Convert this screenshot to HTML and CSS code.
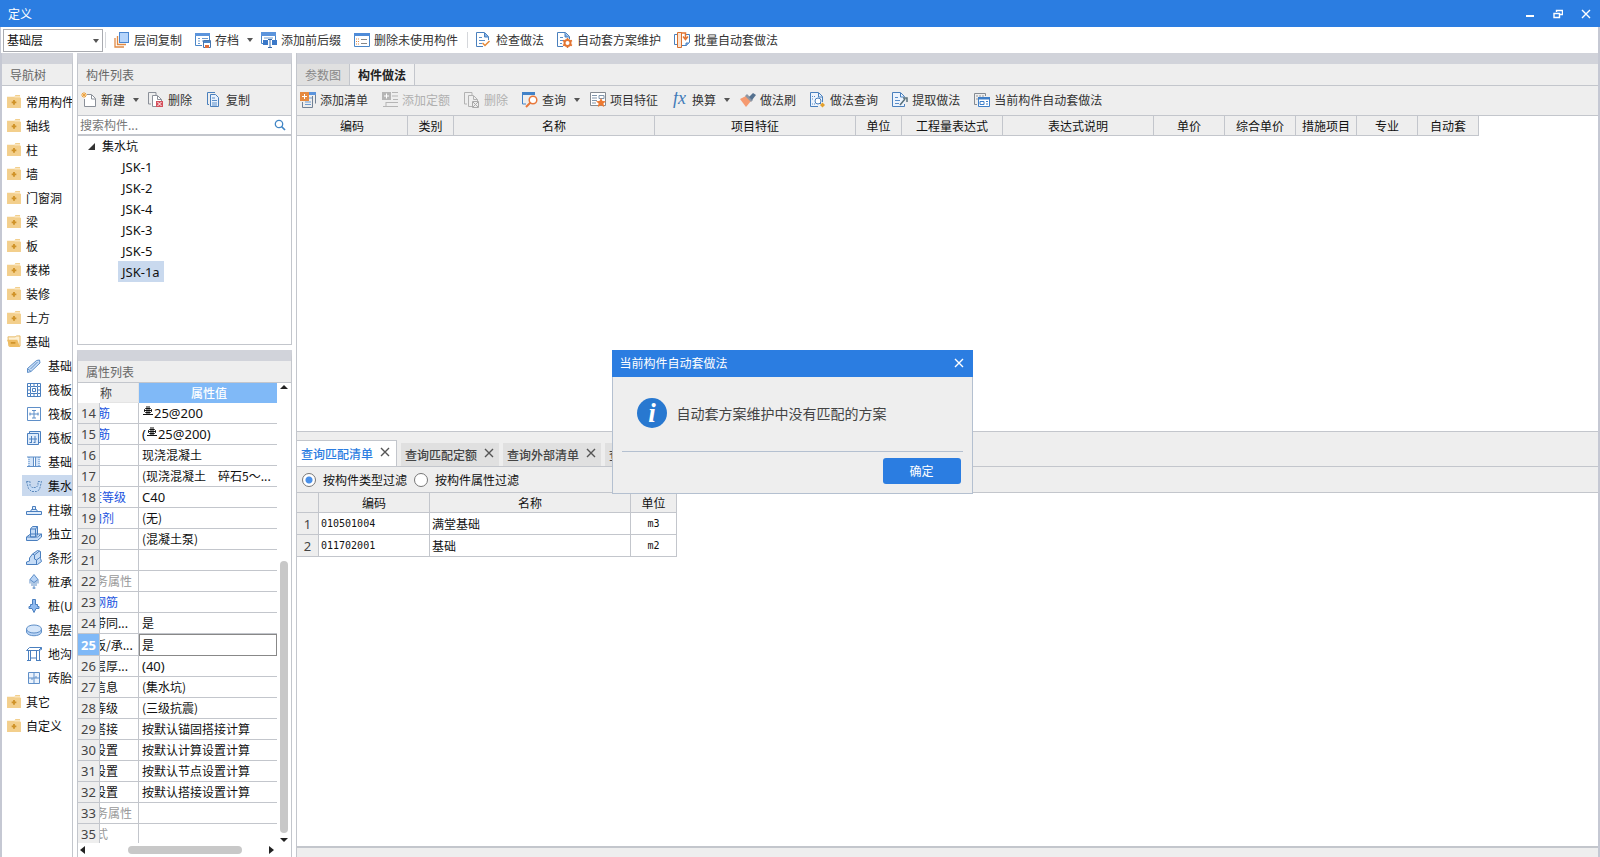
FILE: index.html
```html
<!DOCTYPE html>
<html lang="zh-CN">
<head>
<meta charset="utf-8">
<title>定义</title>
<link rel="stylesheet" href="styles.css">
</head>
<body>
<svg class="defs" aria-hidden="true">
  <symbol id="arrow" viewBox="0 0 6 4"><path d="M0 0h6L3 4z" fill="#555"/></symbol>
  <symbol id="x" viewBox="0 0 10 10"><path d="M1 1l8 8M9 1L1 9" fill="none" stroke="currentColor" stroke-width="1.4"/></symbol>
  <symbol id="folder" viewBox="0 0 15 14"><path d="M0 2h8l1-2h5v3h1v11H0z" fill="#f3cf8c"/><path d="M8 2h6" stroke="#fff3dc"/><path d="M7.500 5.500v5M5 8h5" stroke="#cf9228" stroke-width="2"/></symbol>
  <symbol id="folder-open" viewBox="0 0 15 14"><path d="M1 2h8l1-1h4v11H2z" fill="#fdf0d4" stroke="#e5b65e"/><path d="M0 5h11l3 8H3z" fill="#efbd63"/><path d="M4 8.500h5" stroke="#c98a1e" stroke-width="1.500"/></symbol>
  <symbol id="layers" viewBox="0 0 16 16"><path d="M1 6v9h9M3.500 4v8.500H12" fill="none" stroke="#e08a45" stroke-width="1.300"/><rect x="5.500" y=".5" width="9" height="10" fill="#b5d4fb" stroke="#4a86d0"/></symbol>
  <symbol id="save" viewBox="0 0 16 16"><path d="M.5 1.500h14V8M.5 1.500v12H7" fill="none" stroke="#4a86c8"/><path d="M0 1h15v3H0z" fill="#5b94dc"/><path d="M3 6.500h2M7 6.500h6M3 9h2M7 9h1M3 11.500h2" stroke="#6d9bd0"/><path d="M8.500 8.500h7v7h-7z" fill="#fff" stroke="#4775ae"/><path d="M9 9h6v2H9z" fill="#4a86c8"/><path d="M10 13h4v3h-4z" fill="#df6d3a"/></symbol>
  <symbol id="affix" viewBox="0 0 16 16"><path d="M.5 1.500h14v8M.5 1v10.500H3" fill="none" stroke="#4a86c8"/><path d="M0 0h15v4H0z" fill="#5b94dc"/><path d="M3 6h9" stroke="#6d9bd0"/><path d="M2 8h5v5H2zM11 8h5v5h-5z" fill="#3a78c8"/><path d="M7 7.500h4M9 7.500v8M7 15.500h4" stroke="#3568a8" fill="none"/></symbol>
  <symbol id="list" viewBox="0 0 16 16"><path d="M.5 1.500h15v13H.5z" fill="#fff" stroke="#4a86c8"/><path d="M0 1h16v3H0z" fill="#4f8bd8"/><path d="M2 7h3M2 9.500h3M2 12h3" stroke="#e08a45" stroke-dasharray="1 1"/><path d="M7 7.500h6M7 11.500h6" stroke="#888"/></symbol>
  <symbol id="check" viewBox="0 0 16 16"><path d="M12.500 8V4.500l-4-4h-8v14H7" fill="#fff" stroke="#4a80bd"/><path d="M8.500 1v4h4" fill="#7badea" stroke="#4a80bd"/><path d="M3 5.500h3M3 8.500h6M3 11.500h3" stroke="#5b8fc9"/><path d="M6.500 11l2.500 2.500L13.500 9" fill="none" stroke="#e58a3a" stroke-width="1.500"/></symbol>
  <symbol id="gear" viewBox="0 0 16 16"><path d="M12.500 7V4.500l-4-4h-8v14H6" fill="#fff" stroke="#4a80bd"/><path d="M8 1v4h4" fill="#7badea" stroke="#4a80bd"/><path d="M3 5.500h3M3 8.500h4M3 11.500h2" stroke="#5b8fc9"/><circle cx="10.500" cy="11" r="3" fill="#fff" stroke="#e37533" stroke-width="2"/><path d="M10.500 6v2M10.500 14v2M6 8.500l2 1M13 12.500l2 1M15 8.500l-2 1M8 12.500l-2 1" stroke="#e37533" stroke-width="1.500"/></symbol>
  <symbol id="batch" viewBox="0 0 16 16"><path d="M3 2.500H.5v10H3M12 2.500h3.500v8l-3 3H8" fill="none" stroke="#4a80bd"/><path d="M3.500.5h4v15h-4z" fill="#fbe3d2" stroke="#d9712e"/><path d="M7 1h4.500v5M9 4.500l2.500 3L14 4.500" fill="none" stroke="#e37533" stroke-width="1.500"/><path d="M12 14v-3h3" fill="#8bb5ea" stroke="#4a80bd"/></symbol>
  <symbol id="new" viewBox="0 0 16 16"><path d="M6 2.500h4.500l4 4v8h-11V7" fill="#fff" stroke="#8b9099"/><path d="M10.500 3v4h4" fill="none" stroke="#8b9099"/><path d="M3 0v6M0 3h6M1 1l4 4M5 1L1 5" stroke="#f0a23a"/></symbol>
  <symbol id="del" viewBox="0 0 16 16"><path d="M3 12H.5V.5H8V3" fill="none" stroke="#8b9099"/><path d="M8 14.500H4.500v-11h5l4 4V9" fill="#fff" stroke="#8b9099"/><path d="M9.500 4v3.500h4" fill="none" stroke="#8b9099"/><path d="M8 9h7v6H8z" fill="#d5505c"/><path d="M9.500 10l4 4M13.500 10l-4 4" stroke="#fff"/></symbol>
  <symbol id="del-off" viewBox="0 0 16 16"><path d="M3 12H.5V.5H8V3M8 14.500H4.500v-11h5l4 4V9M9.500 4v3.500h4" fill="none" stroke="#b2b2b2"/><path d="M8.500 9.500h6v6h-6zM9 10l5 5M14 10l-5 5" fill="none" stroke="#aaa"/></symbol>
  <symbol id="copy" viewBox="0 0 16 16"><path d="M3 12.500H1.500V.5H9" fill="none" stroke="#4a80bd"/><path d="M4.500 2.500h5l3 3v9h-8z" fill="#e8f1fd" stroke="#4a80bd"/><path d="M6 6h3M6 8.500h5M6 11h5M6 13h5" stroke="#5b8fc9"/></symbol>
  <symbol id="search" viewBox="0 0 12 12"><circle cx="5" cy="5" r="3.700" fill="none" stroke="#4286c5" stroke-width="1.300"/><path d="M7.500 7.500L11 11" stroke="#4286c5" stroke-width="1.700"/></symbol>
  <symbol id="addlist" viewBox="0 0 16 16"><path d="M9 1.500h6.500v10M12.500 4v11.500h-10V10" fill="none" stroke="#718195"/><path d="M9 0h7v3H9z" fill="#5b94dc"/><path d="M9 6h3M5 10h6M5 12.500h6" stroke="#6d9bd0"/><path d="M0 0h9v9H0z" fill="#e68a3f"/><path d="M4.500 2v5M2 4.500h5" stroke="#fff"/></symbol>
  <symbol id="addquota" viewBox="0 0 16 16"><path d="M0 0h9v8H0z" fill="#b5b5b5"/><path d="M4.500 1.500v5M2 4h5" stroke="#fff"/><path d="M10 .5h6M10 4h6M11 7.500h5M4 10.500h12M1 14.500h15M4 10v4" stroke="#b5b5b5"/></symbol>
  <symbol id="query" viewBox="0 0 16 16"><path d="M0 0h13v3H0z" fill="#4182c8"/><path d="M.5 2v10H4" fill="none" stroke="#4182c8"/><circle cx="11" cy="8" r="3.800" fill="#fff" stroke="#e8783b" stroke-width="1.500"/><path d="M8.500 10.500L4 15" stroke="#e8783b" stroke-width="2"/></symbol>
  <symbol id="feature" viewBox="0 0 16 16"><path d="M.5.500h15v13H.5z" fill="#fff" stroke="#858b92"/><path d="M2 3.500h5M2 6h5M2 8.500h5M2 11h4M9 3.500h5v3H9z" fill="none" stroke="#8095ab"/><path d="M11 6l1.500 3 3.500.3-2.600 2.300.8 3.400-3.200-1.700L7.800 15l.8-3.400L6 9.300 9.500 9z" fill="#ed7a32"/></symbol>
  <symbol id="brush" viewBox="0 0 16 16"><path d="M0 7l6-3 5 5-5 6z" fill="#f59a70"/><path d="M5 4l2-2 6 6-2 2z" fill="#8d97a5"/><path d="M9 5l4-4 3 2-4 5z" fill="#54718f"/></symbol>
  <symbol id="docquery" viewBox="0 0 16 16"><path d="M12.500 10V4.500l-4-4h-8v14H8" fill="#edf4fd" stroke="#4a80bd"/><path d="M8.500 1v4h4" fill="none" stroke="#4a80bd"/><path d="M2 4.500h4M2 7h1M2 12h3" stroke="#5b8fc9" stroke-dasharray="1 1"/><circle cx="8" cy="9" r="3" fill="#fff" stroke="#4a80bd"/><path d="M10 11l2 2" stroke="#4a80bd"/><path d="M12.500 10.500l2.500 2.500-2.500 2.500-2.500-2.500z" fill="#e3a02c"/></symbol>
  <symbol id="extract" viewBox="0 0 16 16"><path d="M12.500 5v-.5l-4-4h-8v14h12V12" fill="#edf4fd" stroke="#4a80bd"/><path d="M8.500 1v4h4" fill="none" stroke="#4a80bd"/><path d="M3 5.500h3M3 8.500h5M3 11.500h4" stroke="#5b8fc9"/><path d="M8 13l5-6M11 6h4v4" fill="none" stroke="#59717c" stroke-width="1.500"/></symbol>
  <symbol id="auto" viewBox="0 0 16 16"><path d="M3 12.500H.5V1.500h11V4" fill="none" stroke="#858b92"/><path d="M2 4h8M2 7h2" stroke="#999" stroke-dasharray="2 1"/><path d="M4.500 5.500h11v9h-11z" fill="#fff" stroke="#3f7fc8"/><path d="M4 5h12v2.500H4z" fill="#3f7fc8"/><path d="M6 9.500h4v3H6zM12 9.500h2M12 12h2" fill="none" stroke="#3f7fc8"/></symbol>
  <symbol id="n1" viewBox="0 0 16 16"><path d="M1.500 14.500v-4l9-8 3-.5.5 3-9 8.500zM1.500 10.500l3.500 3M4.500 11l7-7" fill="#c6dcf6" stroke="#5f8fc8"/></symbol>
  <symbol id="n2" viewBox="0 0 16 16"><path d="M1.500 1.500h13v13h-13zM4.500 4.500h7v7h-7zM6.500 6.500h3v3h-3zM2 4.500h2M2 8h2M2 11.500h2M12 4.500h2M12 8h2M12 11.500h2M4.500 2v2M8 2v2M11.500 2v2M4.500 12v2M8 12v2M11.500 12v2" fill="none" stroke="#4a7fbf"/></symbol>
  <symbol id="n3" viewBox="0 0 16 16"><path d="M1.500 1.500h13v13h-13z" fill="#fff" stroke="#5f8fc8"/><path d="M3.500 8h9M8 4v8M6 4.500h4M6 12h4M4 6.500v3M12 6.500v3" fill="none" stroke="#5f8fc8"/></symbol>
  <symbol id="n4" viewBox="0 0 16 16"><path d="M1.500 3.500h11v11h-11zM3.500 3V1.500h11v11H13" fill="#dfecfb" stroke="#4a7fbf"/><path d="M3 9h8M5.500 6v7M9 6v7M3.500 12.500h2M7.500 12.500H9" fill="none" stroke="#4a7fbf"/></symbol>
  <symbol id="n5" viewBox="0 0 16 16"><path d="M2 3h5v10H2zM9 3h5v10H9z" fill="#d3e4f9"/><path d="M1 3h14M1 12.500h14M7.500 3v10M9.500 3v10" stroke="#5f8fc8"/><path d="M3 3v10M13 3v10" stroke="#5f8fc8" stroke-dasharray="1 1"/></symbol>
  <symbol id="n6" viewBox="0 0 16 16"><path d="M.5 3.500H4v4l2 2h4l2-2v-4h3.500l-2 8-3 2h-5l-3-3z" fill="#c6dcf6" stroke="#5a88bb" stroke-dasharray="2 1"/></symbol>
  <symbol id="n7" viewBox="0 0 16 16"><path d="M.5 9.500h15v3H.5zM4.500 9.500l1-2h5l1 2M6.500 7V4.500h3V7" fill="#dfecfb" stroke="#4a7fbf"/></symbol>
  <symbol id="n8" viewBox="0 0 16 16"><path d="M.5 11l4-3h11v3l-4 3.500H.5zM4.500 11V3l2-2.500h5V9l-2 2zM.5 11h11l4-3M4.500 3h5v8M9.500 3l2-2.500" fill="#c6dcf6" stroke="#4a7fbf"/></symbol>
  <symbol id="n9" viewBox="0 0 16 16"><path d="M.5 14.500V12l3-1V8l3-4 5-3.500 3 1v7l1 3-4 3zM6.500 4l2 1v4l2 1v4.500M8.500 5l5-4M10.500 10l4-3" fill="#c6dcf6" stroke="#4a7fbf"/></symbol>
  <symbol id="n10" viewBox="0 0 16 16"><path d="M8 .5l4 5-4 3-4-3zM4 5.500v4M12 5.500v4M8 8v7M6 7v5M10 7v5M6.500 14h3" fill="#b7d3f5" stroke="#5f8fc8"/></symbol>
  <symbol id="n11" viewBox="0 0 16 16"><path d="M6.500 1.500h3v5h2v2h1.500v2h-3L8 14.500 6 10.500H3v-2h1.500v-2h2z" fill="#8fbaf0" stroke="#4a7fbf"/></symbol>
  <symbol id="n12" viewBox="0 0 16 16"><path d="M.5 7v3c1 5 14 5 15 0V7" fill="#b7d3f5" stroke="#5f8fc8"/><ellipse cx="8" cy="7" rx="7.500" ry="4" fill="#d5e6fa" stroke="#5f8fc8"/></symbol>
  <symbol id="n13" viewBox="0 0 16 16"><path d="M.5 4.500h12l3-3H3.500zM12.500 4.500l3-1v-2M2.500 4.500v10M4.500 4.500v10M10.500 4.500v10M13.500 4.500v10M1 14.500h4M10 14.500h5M5 12h5" fill="none" stroke="#4a7fbf"/></symbol>
  <symbol id="n14" viewBox="0 0 16 16"><path d="M2.500 2.500h11v11h-11zM2.500 8h11M8 2.500v11M6 8v2M10 6v2" fill="#eaf2fc" stroke="#5f8fc8"/></symbol>
  <symbol id="rebar" viewBox="0 0 10 11"><path d="M2.500 2.500h5l1 1v2l-1 1h-5l-1-1v-2zM4 0v9M6 0v9M0 8.500h10M2 4.500h6" fill="none" stroke="#111"/></symbol>
</svg>

<div class="app">
  <header class="titlebar">
    <h1>定义</h1>
    <div class="winctl">
      <button aria-label="最小化"><svg viewBox="0 0 10 10"><path d="M1 7h8" stroke="#fff" stroke-width="2"/></svg></button>
      <button aria-label="还原"><svg viewBox="0 0 10 10"><path d="M3.500 3V1.500h6v4H7M1 4.500h5.500v4H1z" fill="none" stroke="#fff" stroke-width="1.400"/></svg></button>
      <button aria-label="关闭"><svg><use href="#x"/></svg></button>
    </div>
  </header>

  <div class="ribbon">
    <div class="combo">
      <select aria-label="楼层"><option>基础层</option></select>
      <svg class="caret"><use href="#arrow"/></svg>
    </div>
    <span class="sep"></span>
    <button class="tool"><svg><use href="#layers"/></svg>层间复制</button>
    <button class="tool drop"><svg><use href="#save"/></svg>存档<svg class="caret"><use href="#arrow"/></svg></button>
    <button class="tool"><svg><use href="#affix"/></svg>添加前后缀</button>
    <button class="tool"><svg><use href="#list"/></svg>删除未使用构件</button>
    <span class="sep"></span>
    <button class="tool"><svg><use href="#check"/></svg>检查做法</button>
    <button class="tool"><svg><use href="#gear"/></svg>自动套方案维护</button>
    <button class="tool"><svg><use href="#batch"/></svg>批量自动套做法</button>
  </div>

  <div class="workspace">
    <nav class="panel nav">
      <h2>导航树</h2>
      <ul>
        <li><button><svg><use href="#folder"/></svg>常用构件</button></li>
        <li><button><svg><use href="#folder"/></svg>轴线</button></li>
        <li><button><svg><use href="#folder"/></svg>柱</button></li>
        <li><button><svg><use href="#folder"/></svg>墙</button></li>
        <li><button><svg><use href="#folder"/></svg>门窗洞</button></li>
        <li><button><svg><use href="#folder"/></svg>梁</button></li>
        <li><button><svg><use href="#folder"/></svg>板</button></li>
        <li><button><svg><use href="#folder"/></svg>楼梯</button></li>
        <li><button><svg><use href="#folder"/></svg>装修</button></li>
        <li><button><svg><use href="#folder"/></svg>土方</button></li>
        <li><button><svg><use href="#folder-open"/></svg>基础</button></li>
        <li class="child"><button><svg><use href="#n1"/></svg>基础</button></li>
        <li class="child"><button><svg><use href="#n2"/></svg>筏板</button></li>
        <li class="child"><button><svg><use href="#n3"/></svg>筏板</button></li>
        <li class="child"><button><svg><use href="#n4"/></svg>筏板</button></li>
        <li class="child"><button><svg><use href="#n5"/></svg>基础</button></li>
        <li class="child"><button class="selected"><svg><use href="#n6"/></svg>集水</button></li>
        <li class="child"><button><svg><use href="#n7"/></svg>柱墩</button></li>
        <li class="child"><button><svg><use href="#n8"/></svg>独立</button></li>
        <li class="child"><button><svg><use href="#n9"/></svg>条形</button></li>
        <li class="child"><button><svg><use href="#n10"/></svg>桩承</button></li>
        <li class="child"><button><svg><use href="#n11"/></svg>桩(U</button></li>
        <li class="child"><button><svg><use href="#n12"/></svg>垫层</button></li>
        <li class="child"><button><svg><use href="#n13"/></svg>地沟</button></li>
        <li class="child"><button><svg><use href="#n14"/></svg>砖胎</button></li>
        <li><button><svg><use href="#folder"/></svg>其它</button></li>
        <li><button><svg><use href="#folder"/></svg>自定义</button></li>
      </ul>
    </nav>

    <div class="side">
      <section class="panel components">
        <h2>构件列表</h2>
        <div class="toolbar">
          <button class="tool drop"><svg><use href="#new"/></svg>新建<svg class="caret"><use href="#arrow"/></svg></button>
          <button class="tool"><svg><use href="#del"/></svg>删除</button>
          <button class="tool"><svg><use href="#copy"/></svg>复制</button>
        </div>
        <div class="search">
          <input type="text" placeholder="搜索构件..." aria-label="搜索构件">
          <button aria-label="搜索"><svg><use href="#search"/></svg></button>
        </div>
        <ul class="tree">
          <li class="root"><button><svg viewBox="0 0 7 7"><path d="M7 0v7H0z" fill="#333"/></svg>集水坑</button></li>
          <li><button>JSK-1</button></li>
          <li><button>JSK-2</button></li>
          <li><button>JSK-4</button></li>
          <li><button>JSK-3</button></li>
          <li><button>JSK-5</button></li>
          <li><button class="selected">JSK-1a</button></li>
        </ul>
      </section>

      <section class="panel props">
        <h2>属性列表</h2>
        <div class="propbody">
          <table class="proptable">
            <colgroup><col class="pnum"><col class="pname"><col></colgroup>
            <thead><tr><th></th><th class="namehead">称</th><th class="valhead">属性值</th></tr></thead>
            <tbody>
              <tr><th>14</th><td class="blue"><span class="cut2">筋</span></td><td class="latin"><svg><use href="#rebar"/></svg>25@200</td></tr>
              <tr><th>15</th><td class="blue"><span class="cut2">筋</span></td><td class="latin">(<svg><use href="#rebar"/></svg>25@200)</td></tr>
              <tr><th>16</th><td></td><td>现浇混凝土</td></tr>
              <tr><th>17</th><td></td><td>(现浇混凝土　碎石5～...</td></tr>
              <tr><th>18</th><td class="blue"><span class="cut10">度等级</span></td><td class="latin">C40</td></tr>
              <tr><th>19</th><td class="blue"><span class="cut10">加剂</span></td><td>(无)</td></tr>
              <tr><th>20</th><td></td><td>(混凝土泵)</td></tr>
              <tr><th>21</th><td></td><td></td></tr>
              <tr><th>22</th><td class="gray"><span class="cut4">务属性</span></td><td></td></tr>
              <tr><th>23</th><td class="blue"><span class="cut6">钢筋</span></td><td></td></tr>
              <tr><th>24</th><td><span class="cut6">带同...</span></td><td>是</td></tr>
              <tr class="current"><th>25</th><td><span class="cut6">板/承...</span></td><td>是</td></tr>
              <tr><th>26</th><td><span class="cut6">层厚...</span></td><td class="latin">(40)</td></tr>
              <tr><th>27</th><td><span class="cut6">信息</span></td><td>(集水坑)</td></tr>
              <tr><th>28</th><td><span class="cut6">等级</span></td><td>(三级抗震)</td></tr>
              <tr><th>29</th><td><span class="cut6">搭接</span></td><td>按默认锚固搭接计算</td></tr>
              <tr><th>30</th><td><span class="cut6">设置</span></td><td>按默认计算设置计算</td></tr>
              <tr><th>31</th><td><span class="cut6">设置</span></td><td>按默认节点设置计算</td></tr>
              <tr><th>32</th><td><span class="cut6">设置</span></td><td>按默认搭接设置计算</td></tr>
              <tr><th>33</th><td class="gray"><span class="cut4">务属性</span></td><td></td></tr>
              <tr><th>35</th><td class="gray"><span class="cut4">式</span></td><td></td></tr>
            </tbody>
          </table>
          <div class="vscroll"><i class="up"></i><span class="track"><i class="thumb"></i></span><i class="down"></i></div>
        </div>
        <div class="hscroll"><i class="left"></i><span class="track"><i class="thumb"></i></span><i class="right"></i></div>
      </section>
    </div>

    <main class="main">
      <section class="upper">
        <div class="tabs">
          <button>参数图</button><button class="active">构件做法</button>
        </div>
        <div class="toolbar wide">
          <button class="tool"><svg><use href="#addlist"/></svg>添加清单</button>
          <button class="tool off" disabled><svg><use href="#addquota"/></svg>添加定额</button>
          <button class="tool off" disabled><svg><use href="#del-off"/></svg>删除</button>
          <button class="tool drop"><svg><use href="#query"/></svg>查询<svg class="caret"><use href="#arrow"/></svg></button>
          <button class="tool"><svg><use href="#feature"/></svg>项目特征</button>
          <button class="tool drop"><svg viewBox="0 0 16 16"><text x="1" y="12" class="fx">fx</text></svg>换算<svg class="caret"><use href="#arrow"/></svg></button>
          <button class="tool"><svg><use href="#brush"/></svg>做法刷</button>
          <button class="tool"><svg><use href="#docquery"/></svg>做法查询</button>
          <button class="tool"><svg><use href="#extract"/></svg>提取做法</button>
          <button class="tool"><svg><use href="#auto"/></svg>当前构件自动套做法</button>
        </div>
        <table class="grid methods">
          <colgroup><col class="w111"><col class="w46"><col class="w201"><col class="w201"><col class="w46"><col class="w101"><col class="w151"><col class="w71"><col class="w71"><col class="w61"><col class="w61"><col class="w61"></colgroup>
          <thead><tr><th>编码</th><th>类别</th><th>名称</th><th>项目特征</th><th>单位</th><th>工程量表达式</th><th>表达式说明</th><th>单价</th><th>综合单价</th><th>措施项目</th><th>专业</th><th>自动套</th></tr></thead>
        </table>
      </section>

      <section class="lower">
        <div class="subtabs">
          <button class="active">查询匹配清单<svg><use href="#x"/></svg></button>
          <button>查询匹配定额<svg><use href="#x"/></svg></button>
          <button>查询外部清单<svg><use href="#x"/></svg></button>
          <button>查询</button>
        </div>
        <div class="filters">
          <label><input type="radio" name="filter" checked>按构件类型过滤</label>
          <label><input type="radio" name="filter">按构件属性过滤</label>
        </div>
        <div class="results">
          <table class="grid matches">
            <colgroup><col class="w22"><col class="w111"><col class="w201"><col class="w46"></colgroup>
            <thead><tr><th></th><th>编码</th><th>名称</th><th>单位</th></tr></thead>
            <tbody>
              <tr><th>1</th><td class="mono">010501004</td><td>满堂基础</td><td class="mono unit">m3</td></tr>
              <tr><th>2</th><td class="mono">011702001</td><td>基础</td><td class="mono unit">m2</td></tr>
            </tbody>
          </table>
        </div>
      </section>
    </main>
  </div>

  <div class="overlay">
    <div class="dialog" role="dialog" aria-labelledby="dlg">
      <div class="dlghead"><h2 id="dlg">当前构件自动套做法</h2><button aria-label="关闭"><svg><use href="#x"/></svg></button></div>
      <div class="message">
        <svg viewBox="0 0 30 30"><circle cx="15" cy="15" r="15" fill="#2878d0"/><text x="15" y="24" class="info">i</text></svg>
        <p>自动套方案维护中没有匹配的方案</p>
      </div>
      <div class="actions"><button>确定</button></div>
    </div>
  </div>
</div>
</body>
</html>
```
FILE: styles.css
```css
* { box-sizing: border-box; }
html, body { height: 100%; }
body {
  margin: 0;
  overflow: hidden;
  font: 12px/18px "Noto Sans CJK SC", sans-serif;
  color: #111;
  background: #fff;
}
h1, h2, p, ul { margin: 0; padding: 0; font-size: 12px; font-weight: 400; list-style: none; }
button, select, input { font: inherit; color: inherit; margin: 0; }
button { border: 0; background: none; padding: 0; white-space: nowrap; }
svg { display: block; flex: none; }
.defs { position: absolute; width: 0; height: 0; }
.fx { font: italic 18px "Liberation Serif", serif; fill: #3f7ab8; }
.info { font: italic bold 27px "Liberation Serif", serif; fill: #fff; text-anchor: middle; }

.app { height: 100vh; display: flex; flex-direction: column; }

.titlebar {
  flex: none;
  height: 27px;
  padding: 0 8px;
  display: flex;
  align-items: center;
  justify-content: space-between;
  background: #2b7de1;
  color: #fff;
}
.winctl { display: flex; gap: 16px; }
.winctl button { width: 12px; height: 12px; display: grid; place-items: center; }
.winctl svg { width: 10px; height: 10px; }

.ribbon {
  flex: none;
  height: 26px;
  padding-left: 2px;
  display: flex;
  align-items: center;
  border-left: 1px solid #c5c8d3;
  border-right: 2px solid #c5c8d3;
}
.combo { position: relative; width: 100px; height: 23px; }
.combo select {
  width: 100%;
  height: 100%;
  padding: 0 3px;
  appearance: none;
  border: 1px solid #a9abb0;
  border-radius: 0;
  background: #fff;
}
.caret { width: 6px; height: 4px; }
.combo .caret { position: absolute; right: 4px; top: 10px; }
.sep { width: 1px; height: 16px; margin: 0 1px 0 2px; background: #d5d7db; }
.tool + .sep { margin: 0 1px 0 3px; }
.tool {
  display: flex;
  align-items: center;
  gap: 4px;
  height: 24px;
  padding: 0 6px 0 7px;
  color: #333;
}
.tool svg { width: 16px; height: 16px; }
.tool .caret { width: 6px; height: 4px; margin-left: 4px; }
.tool.drop { padding-right: 1px; }
.tool.off { color: #b0b0b0; }

.workspace {
  flex: 1;
  min-height: 0;
  display: flex;
  gap: 4px;
  border-left: 2px solid #c5c8d3;
  border-right: 2px solid #c5c8d3;
}
.panel {
  display: flex;
  flex-direction: column;
  border-top: 11px solid #d1d3da;
  overflow: hidden;
}
.panel h2 {
  flex: none;
  height: 22px;
  padding: 0 8px;
  line-height: 21px;
  background: #eee;
  color: #666;
  border-bottom: 1px solid #c3c6cc;
}
.nav { width: 71px; flex: none; border-right: 1px solid #c3c6cc; }
.nav ul { padding-top: 5px; }
.nav li { height: 24px; }
.nav button {
  display: flex;
  align-items: center;
  width: 100%;
  height: 21px;
  gap: 5px;
  padding-left: 5px;
}
.nav svg { width: 14px; height: 13px; }
.nav .child { padding-left: 20px; }
.nav .child button { gap: 6px; padding-left: 4px; overflow: hidden; }
.nav .child svg { width: 16px; height: 16px; }
.selected { background: #c9d9ee; }

.side { width: 215px; flex: none; display: flex; flex-direction: column; gap: 5px; }
.components { flex: 280 1 0; border-right: 1px solid #c3c6cc; border-bottom: 1px solid #c3c6cc; border-left: 1px solid #c3c6cc; }
.props { flex: 496 1 0; border-right: 1px solid #c3c6cc; border-left: 1px solid #c3c6cc; }
.toolbar {
  flex: none;
  height: 30px;
  display: flex;
  align-items: center;
  padding-bottom: 1px;
  background: #eee;
  border-bottom: 1px solid #c3c6cc;
}
.components .tool { padding-left: 3px; }
.components .tool + .tool { padding-left: 8px; }
.wide .tool { padding-right: 7px; }
.wide .tool.drop { padding-right: 3px; }
.wide .tool:first-child { padding-left: 3px; }
.search {
  flex: none;
  height: 20px;
  display: flex;
  align-items: center;
  padding-right: 5px;
  border-bottom: 2px solid #c3c6cc;
}
.search input { flex: 1; min-width: 0; height: 18px; border: 0; padding: 0 2px; outline: 0; }
.search input::placeholder { color: #777; }
.search svg { width: 12px; height: 12px; }
.tree li { height: 21px; padding-left: 40px; }
.tree .root { height: 20px; padding-left: 10px; }
.tree button { height: 21px; padding: 0 4px; font-family: "Noto Sans", sans-serif; font-size: 13px; }
.tree .root button { display: flex; align-items: center; gap: 7px; height: 20px; padding: 0; font: inherit; }
.tree svg { width: 7px; height: 7px; }

.propbody { flex: 1; min-height: 0; display: flex; overflow: hidden; }
.proptable { flex: 1; min-width: 0; table-layout: fixed; border-collapse: separate; border-spacing: 0; }
.pnum { width: 22px; }
.pname { width: 39px; }
.proptable tr { height: 21px; }
.proptable th, .proptable td {
  height: 21px;
  padding: 0 0 0 3px;
  line-height: 20px;
  font-weight: 400;
  text-align: left;
  white-space: nowrap;
  overflow: hidden;
  border-right: 1px solid #c3c6cc;
  border-bottom: 1px solid #c3c6cc;
}
.proptable td:last-child { border-right: 0; }
.proptable td:nth-child(2) { padding-left: 0; }
.proptable span { display: block; }
.cut2 { margin-left: -2px; }
.cut4 { margin-left: -4px; }
.cut6 { margin-left: -6px; }
.cut10 { margin-left: -10px; }
.proptable tbody th { padding: 0; text-align: center; background: #eee; color: #444; font-family: "Noto Sans", sans-serif; font-size: 13px; }
.proptable thead tr, .proptable thead th { height: 20px; border-color: #e4e4e4; line-height: 19px; }
.proptable thead th:first-child { border-color: #fff; }
.proptable .namehead { background: #eee; padding-left: 0; color: #444; }
.proptable .valhead { background: #80b9f7; border-color: #80b9f7; color: #fff; text-align: center; font-weight: 500; }
.proptable .latin { font-family: "Noto Sans", sans-serif; font-size: 13px; }
.latin svg { display: inline-block; width: 10px; height: 11px; margin: 0 1px; vertical-align: 1px; }
.blue { color: #2153e0; }
.gray { color: #999; }
.proptable .current th { background: #80b9f7; color: #fff; font-weight: 700; }
.proptable .current td:last-child { border: 1px solid #666; padding-left: 2px; outline: 1px solid #888; outline-offset: -1px; }

.vscroll { width: 14px; flex: none; display: flex; flex-direction: column; align-items: center; padding: 2px 0 1px; }
.vscroll .track { flex: 1; display: flex; flex-direction: column; justify-content: flex-end; padding: 5px 0; }
.vscroll .thumb { width: 8px; height: 62%; border-radius: 4px; background: #c8c8c8; }
.hscroll { flex: none; height: 14px; display: flex; align-items: center; padding: 0 17px 0 2px; }
.hscroll .track { flex: 1; display: flex; padding-left: 43px; }
.hscroll .thumb { width: 81%; height: 8px; border-radius: 4px; background: #c8c8c8; }
.up, .down { border: 4px solid transparent; border-top: 0; border-bottom: 4px solid #222; }
.down { border-bottom: 0; border-top: 4px solid #222; }
.left, .right { border: 4px solid transparent; border-left: 0; border-right: 5px solid #222; }
.right { border-right: 0; border-left: 5px solid #222; }

.main { flex: 1; min-width: 0; display: flex; flex-direction: column; border-left: 1px solid #c3c6cc; }
.upper { flex: 367 1 0; min-height: 0; border-top: 11px solid #d1d3da; border-bottom: 1px solid #c3c6cc; overflow: hidden; }
.tabs { height: 22px; display: flex; background: #eee; border-bottom: 1px solid #c3c6cc; }
.tabs button { padding: 0 8px; color: #888; background: #e0e0e0; border-right: 1px solid #c3c6cc; }
.tabs .active { color: #222; font-weight: 700; background: #f1f1f1; }

.grid { table-layout: fixed; width: 0; border-collapse: separate; border-spacing: 0; }
.grid th, .grid td {
  height: 20px;
  padding: 0;
  font-weight: 400;
  line-height: 18px;
  white-space: nowrap;
  overflow: hidden;
  border-right: 1px solid #c3c6cc;
  border-bottom: 1px solid #c3c6cc;
}
.grid th { background: #eee; }
.w22 { width: 22px; }
.w46 { width: 46px; }
.w61 { width: 61px; }
.w71 { width: 71px; }
.w101 { width: 101px; }
.w111 { width: 111px; }
.w151 { width: 151px; }
.w201 { width: 201px; }
.matches tbody td { height: 22px; padding-left: 2px; }
.matches tbody th { color: #444; font-family: "Noto Sans", sans-serif; font-size: 13px; }
.matches .mono { font-family: "DejaVu Sans Mono", monospace; font-size: 10px; }
.matches .unit { padding: 0; text-align: center; }

.lower { flex: 416 1 0; min-height: 0; display: flex; flex-direction: column; background: #eee; padding-bottom: 9px; }
.subtabs { flex: none; height: 35px; display: flex; align-items: flex-end; gap: 4px; border-bottom: 1px solid #c3c6cc; }
.subtabs button {
  display: flex;
  align-items: center;
  gap: 7px;
  height: 23px;
  padding: 0 5px 0 4px;
  background: #e0e0e0;
  color: #444;
  font-weight: 500;
}
.subtabs .active { height: 26px; padding-right: 6px; background: #fff; color: #2b7de1; border-top: 1px solid #c3c6cc; border-right: 1px solid #c3c6cc; }
.subtabs svg { width: 10px; height: 10px; color: #555; margin-bottom: 4px; }
.filters { flex: none; height: 26px; display: flex; align-items: center; gap: 7px; padding-left: 5px; border-bottom: 1px solid #c3c6cc; }
.filters label { display: flex; align-items: center; gap: 7px; }
.filters input {
  appearance: none;
  width: 14px;
  height: 14px;
  border: 1px solid #777;
  border-radius: 50%;
  background: #fff;
}
.filters input:checked { background: radial-gradient(circle, #4a90e8 0 3px, #fff 4px); }
.results { flex: 1; min-height: 0; background: #fff; border-bottom: 2px solid #c3c6cc; }

.overlay { position: fixed; inset: 0; display: grid; place-items: center; padding-bottom: 14px; padding-right: 16px; }
.dialog { width: 361px; background: #eee; border: 1px solid #b4c0d0; border-top: 0; }
.dlghead {
  height: 27px;
  margin: 0 -1px;
  padding: 0 9px 0 8px;
  display: flex;
  align-items: center;
  justify-content: space-between;
  background: #2b7de1;
  color: #fff;
}
.dlghead svg { width: 10px; height: 10px; }
.message { display: flex; align-items: center; gap: 10px; height: 75px; margin: 0 9px; padding: 0 15px 2px; border-bottom: 1px solid #b4c0d0; }
.message svg { width: 30px; height: 30px; }
.message p { font-size: 14px; line-height: 20px; color: #444; }
.actions { display: flex; justify-content: flex-end; padding: 6px 11px 9px; }
.actions button { width: 78px; height: 26px; border-radius: 3px; background: #2b7de1; color: #fff; }
```
